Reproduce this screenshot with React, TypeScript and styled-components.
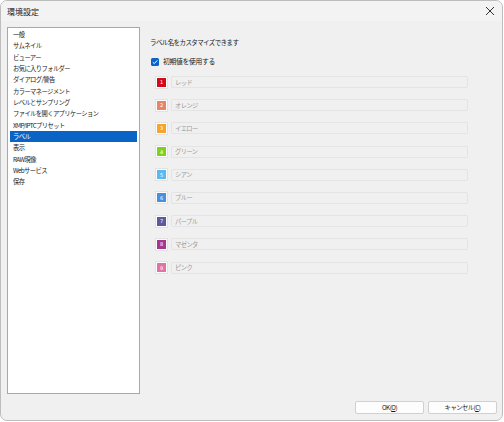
import React from 'react';
import { styled, createGlobalStyle } from 'styled-components';

const GlobalStyle = createGlobalStyle`
  html, body {
    margin: 0;
    padding: 0;
    background: #ffffff;
  }
  body {
    font-family: 'Noto Sans CJK JP', 'Noto Sans', sans-serif;
    color: #1a1a1a;
  }
`;

const categories = [
  '一般',
  'サムネイル',
  'ビューアー',
  'お気に入りフォルダー',
  'ダイアログ/警告',
  'カラーマネージメント',
  'レベルとサンプリング',
  'ファイルを開くアプリケーション',
  'XMP/IPTCプリセット',
  'ラベル',
  '表示',
  'RAW現像',
  'Webサービス',
  '保存',
];

const labels = [
  { name: 'レッド', color: '#d4091c' },
  { name: 'オレンジ', color: '#ea8468' },
  { name: 'イエロー', color: '#f6a52a' },
  { name: 'グリーン', color: '#7fd11e' },
  { name: 'シアン', color: '#5bb8f0' },
  { name: 'ブルー', color: '#4a8ee0' },
  { name: 'パープル', color: '#5c5a9e' },
  { name: 'マゼンタ', color: '#a4388f' },
  { name: 'ピンク', color: '#e073a3' },
];

const App = () => {
  return (
    <>
      <GlobalStyle />
      <Window>
        <TitleBar>
          <Title>環境設定</Title>
          <CloseButton>
            <svg width="10" height="10" viewBox="0 0 10 10">
              <path d="M1 1 L9 9 M9 1 L1 9" stroke="#333" strokeWidth="1" />
            </svg>
          </CloseButton>
        </TitleBar>
        <Body>
          <Content>
            <CategoryList>
              {categories.map((c) => (
                <CategoryItem key={c} $selected={c === 'ラベル'}>
                  {c}
                </CategoryItem>
              ))}
            </CategoryList>
            <Panel>
              <Caption>ラベル名をカスタマイズできます</Caption>
              <CheckRow>
                <CheckBox>
                  <svg width="8" height="8" viewBox="0 0 8 8">
                    <path d="M1.8 4.2 L3.3 5.6 L6.3 2.4" stroke="#fff" strokeWidth="1" fill="none" />
                  </svg>
                </CheckBox>
                <span>初期値を使用する</span>
              </CheckRow>
              <LabelRows>
                {labels.map((l, i) => (
                  <LabelRow key={l.name}>
                    <Swatch $color={l.color}>{i + 1}</Swatch>
                    <NameField placeholder={l.name} readOnly />
                  </LabelRow>
                ))}
              </LabelRows>
            </Panel>
          </Content>
          <Footer>
            <DialogButton>
              OK(<u>O</u>)
            </DialogButton>
            <DialogButton>
              キャンセル(<u>C</u>)
            </DialogButton>
          </Footer>
        </Body>
      </Window>
    </>
  );
};

export default App;

const Window = styled.div`
  box-sizing: border-box;
  width: 503px;
  height: 421px;
  border: 1px solid #bdbdbd;
  border-radius: 7px;
  background: #f0f0f0;
  overflow: hidden;
  display: flex;
  flex-direction: column;
`;

const TitleBar = styled.div`
  height: 20px;
  flex-shrink: 0;
  display: flex;
  align-items: center;
  justify-content: space-between;
  padding: 0 6px 0 6px;
  background: #f3f3f3;
`;

const Title = styled.span`
  font-size: 8px;
  color: #1a1a1a;
`;

const CloseButton = styled.div`
  width: 12px;
  height: 12px;
  display: flex;
  align-items: center;
  justify-content: center;
`;

const Body = styled.div`
  flex: 1;
  display: flex;
  flex-direction: column;
  padding: 6px 5px 0 6px;
`;

const Content = styled.div`
  display: flex;
  gap: 10px;
`;

const CategoryList = styled.div`
  box-sizing: border-box;
  width: 133px;
  height: 367px;
  background: #ffffff;
  border: 1px solid #a8a8a8;
  padding: 1px 2px;
  display: flex;
  flex-direction: column;
`;

const CategoryItem = styled.div<{ $selected?: boolean }>`
  height: 11.33px;
  line-height: 11.33px;
  font-size: 6.3px;
  letter-spacing: -0.6px;
  padding-left: 3px;
  white-space: nowrap;
  color: ${(p) => (p.$selected ? '#ffffff' : '#1a1a1a')};
  background: ${(p) => (p.$selected ? '#0a64c6' : 'transparent')};
`;

const Panel = styled.div`
  flex: 1;
  display: flex;
  flex-direction: column;
  padding-top: 10px;
`;

const Caption = styled.div`
  font-size: 6.5px;
  letter-spacing: -0.6px;
  line-height: 11px;
`;

const CheckRow = styled.div`
  display: flex;
  align-items: center;
  gap: 4px;
  margin-top: 8px;
  margin-left: 1px;
  font-size: 6.8px;
  letter-spacing: -0.3px;
  line-height: 11px;
`;

const CheckBox = styled.div`
  width: 8px;
  height: 8px;
  border-radius: 1.5px;
  background: #0a64c6;
  display: flex;
  align-items: center;
  justify-content: center;
`;

const LabelRows = styled.div`
  display: flex;
  flex-direction: column;
  gap: 11.2px;
  margin-top: 9px;
  padding-left: 6px;
`;

const LabelRow = styled.div`
  display: flex;
  align-items: center;
  gap: 4px;
`;

const Swatch = styled.div<{ $color: string }>`
  box-sizing: border-box;
  width: 11px;
  height: 11px;
  background: ${(p) => p.$color};
  border: 1px solid #ffffff;
  outline: 1px solid #e2e2e2;
  color: #ffffff;
  font-size: 5px;
  font-family: 'DejaVu Sans', sans-serif;
  display: flex;
  align-items: center;
  justify-content: center;
`;

const NameField = styled.input`
  box-sizing: border-box;
  width: 297px;
  height: 12px;
  border: 1px solid #e4e4e4;
  border-radius: 2px;
  background: #f0f0f0;
  padding: 0 3px;
  font-family: 'Noto Sans CJK JP', sans-serif;
  font-size: 6.3px;
  letter-spacing: -0.6px;
  outline: none;
  &::placeholder {
    color: #9a9a9a;
  }
`;

const Footer = styled.div`
  display: flex;
  justify-content: flex-end;
  gap: 4px;
  margin-top: 7px;
  padding-right: 0;
`;

const DialogButton = styled.button`
  box-sizing: border-box;
  width: 69px;
  height: 13px;
  padding: 0;
  background: #fdfdfd;
  border: 1px solid #d0d0d0;
  border-radius: 2px;
  font-family: 'Noto Sans CJK JP', sans-serif;
  font-size: 6.3px;
  letter-spacing: -0.5px;
  color: #1a1a1a;
  line-height: 11px;
`;
